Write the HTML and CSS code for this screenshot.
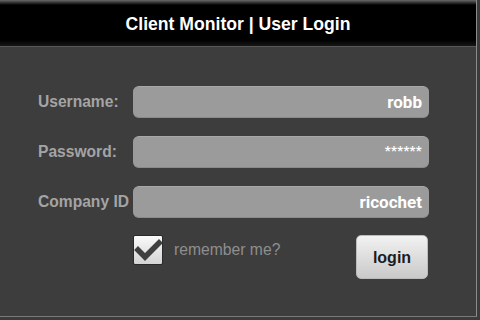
FILE: index.html
```html
<!DOCTYPE html>
<html lang="en">
<head>
    <meta charset="UTF-8">
    <meta name="viewport" content="width=device-width, initial-scale=1.0">
    <title>Client Monitor | User Login</title>
    <link rel="stylesheet" href="styles.css">
</head>
<body>
    <div class="frame">
        <header>
            <h1>Client Monitor | User Login</h1>
        </header>

        <form class="login">
            <label class="label" for="user">Username:</label>
            <div class="field" id="user">robb</div>

            <label class="label" for="pass">Password:</label>
            <div class="field field-pass" id="pass">******</div>

            <label class="label" for="company">Company ID</label>
            <div class="field" id="company">ricochet</div>

            <div class="options">
                <span class="check">
                    <svg width="30" height="30" viewBox="0 0 30 30">
                        <path d="M5 15 L12 22 L26 8" fill="none" stroke="#404040" stroke-width="5.5" stroke-linecap="square" stroke-linejoin="miter"/>
                    </svg>
                </span>
                <span class="remember">remember me?</span>
                <button type="button" class="btn">login</button>
            </div>
        </form>
    </div>
</body>
</html>
```

FILE: styles.css
```css
body {
    margin: 0;
    background-color: #3b3b3b;
    font-family: 'Liberation Sans', Arial, sans-serif;
}

.frame {
    width: 476px;
    height: 316px;
    background-color: #3d3d3d;
    border-right: 1px solid #8c8c8c;
    border-bottom: 1px solid #7a7a7a;
}

header {
    height: 46px;
    background: linear-gradient(#6a6a6a 0, #000 5px, #000 40px, #161616 46px);
    border-bottom: 1px solid #585858;
    display: flex;
    align-items: center;
    justify-content: center;
}

header h1 {
    margin: 0;
    color: #fff;
    font-size: 17.6px;
    font-weight: bold;
    padding-top: 2px;
}

.login {
    display: grid;
    grid-template-columns: 95px 296px;
    row-gap: 18px;
    margin: 39px 0 0 38px;
}

.label {
    display: flex;
    align-items: center;
    color: #a4a4a4;
    font-size: 15.6px;
    font-weight: bold;
    white-space: nowrap;
}

.field {
    height: 32px;
    box-sizing: border-box;
    border-radius: 6px;
    background-color: #9b9b9b;
    border-top: 1px solid #a8a8a8;
    border-bottom: 1px solid #8a8a8a;
    padding: 0 7px;
    display: flex;
    align-items: center;
    justify-content: flex-end;
    color: #fff;
    font-family: Roboto, 'Liberation Sans', sans-serif;
    font-size: 17px;
    font-weight: bold;
}

.field-pass {
    font-size: 13px;
    align-items: flex-start;
    padding-top: 6px;
    letter-spacing: 0.3px;
}

.options {
    grid-column: 2;
    display: flex;
    align-items: flex-start;
    margin-top: -1px;
}

.check {
    width: 30px;
    height: 30px;
    box-sizing: border-box;
    border: 1px solid #2a2a2a;
    border-radius: 2px;
    background: linear-gradient(#fafafa, #d4d4d4);
    display: flex;
}

.check svg {
    margin: -1px;
}

.remember {
    margin: 6px 0 0 11px;
    color: #8e8e8e;
    font-size: 15.7px;
}

.btn {
    margin-left: auto;
    margin-right: 1px;
    width: 72px;
    height: 44px;
    border: 1px solid #bcbcbc;
    border-radius: 5px;
    background: linear-gradient(#f2f2f2, #c9c9c9);
    color: #1c1c1c;
    font-family: 'Liberation Sans', Arial, sans-serif;
    font-size: 16px;
    font-weight: bold;
    padding: 2px 0 0 0;
}
```
